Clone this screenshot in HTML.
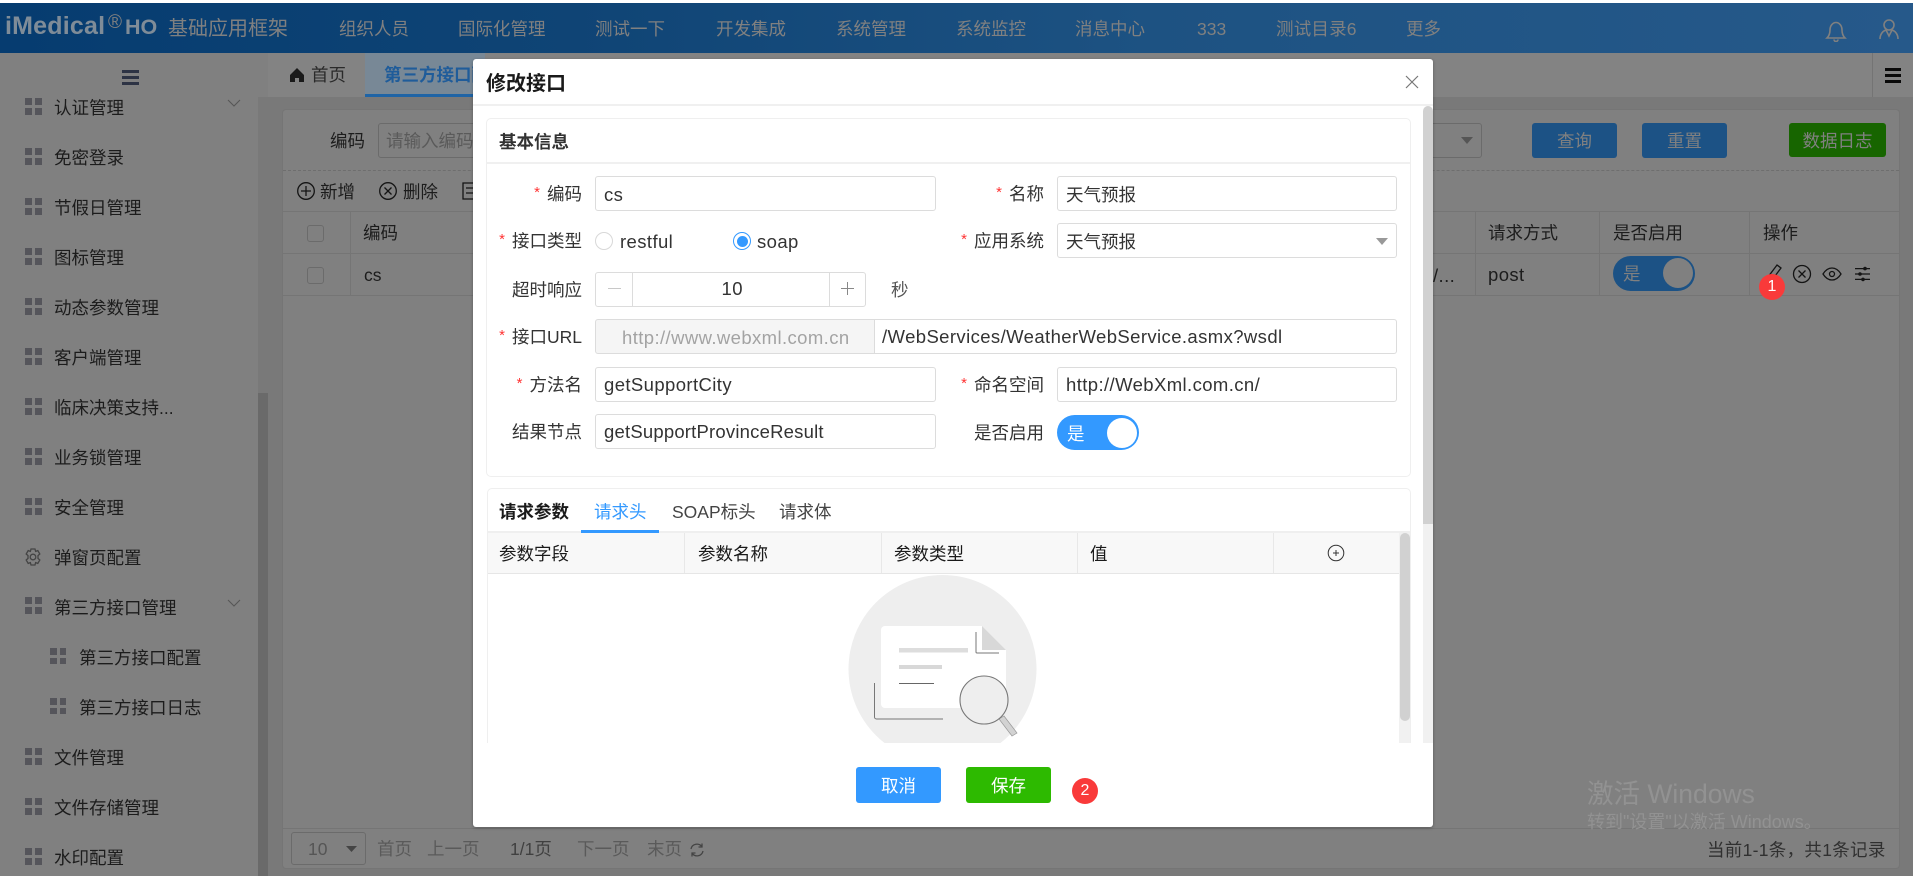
<!DOCTYPE html>
<html lang="zh"><head><meta charset="utf-8"><title>修改接口</title>
<style>
*{box-sizing:border-box}
html,body{margin:0;padding:0;width:1920px;height:879px;overflow:hidden;background:#fff;font-family:"Liberation Sans","Noto Sans CJK SC",sans-serif;font-size:17.5px;color:#1c1c1c}
.t{position:absolute;white-space:nowrap;transform:translateY(-50%);line-height:24px}
.b{position:absolute}
svg{position:absolute;overflow:hidden}
.nav{color:#808080}
.grid{position:absolute;width:17px;height:17px;background:
 linear-gradient(#55555b,#55555b) 0 0/7px 7px no-repeat,
 linear-gradient(#55555b,#55555b) 10px 0/7px 7px no-repeat,
 linear-gradient(#55555b,#55555b) 0 10px/7px 7px no-repeat,
 linear-gradient(#55555b,#55555b) 10px 10px/7px 7px no-repeat}
.grid.s{width:16px;height:16px}
.l{position:absolute;background:#757575}
.inp{position:absolute;background:#fff;border:1.25px solid #dcdcdc;border-radius:3px}
.m{color:#333}
.lb{color:#333;text-align:right}
.lb i{color:#f33;font-style:normal;font-size:15px;margin-right:7px;position:relative;top:-3px}
.v{color:#333}
.lat{font-size:18.5px;letter-spacing:.4px}
.btn{position:absolute;border-radius:3px;display:flex;align-items:center;justify-content:center}
.badge{position:absolute;width:26px;height:26px;border-radius:50%;background:#f93a3a;color:#fff;font-size:16px;display:flex;align-items:center;justify-content:center}
</style></head><body>

<!-- page -->
<div class="b" style="left:0;top:3px;width:1913px;height:873px;background:#808080;overflow:hidden"></div>

<!-- header -->
<div class="b" style="left:0;top:3px;width:1913px;height:50px;background:linear-gradient(90deg,#063c70,#0f4475 30%,#1d5282 60%,#26598a)"></div>
<div class="t nav" style="left:5px;top:26px;font-size:25px;font-weight:bold;letter-spacing:.2px;color:#7f8c98">iMedical</div>
<div class="t nav" style="left:108px;top:23px;font-size:19px">®</div>
<div class="t nav" style="left:125px;top:27px;font-size:21.500px;font-weight:bold;color:#7f8c98">HO</div>
<div class="t nav" style="left:168px;top:29px;font-size:20px">基础应用框架</div>
<div class="t nav" style="left:339px;top:29px">组织人员</div>
<div class="t nav" style="left:458px;top:29px">国际化管理</div>
<div class="t nav" style="left:595px;top:29px">测试一下</div>
<div class="t nav" style="left:716px;top:29px">开发集成</div>
<div class="t nav" style="left:836px;top:29px">系统管理</div>
<div class="t nav" style="left:956px;top:29px">系统监控</div>
<div class="t nav" style="left:1075px;top:29px">消息中心</div>
<div class="t nav" style="left:1197px;top:29px">333</div>
<div class="t nav" style="left:1276px;top:29px;letter-spacing:.2px">测试目录6</div>
<div class="t nav" style="left:1406px;top:29px">更多</div>
<svg style="left:1824px;top:18px" width="24" height="24" viewBox="0 0 24 24" fill="none" stroke="#808080" stroke-width="1.6"><path d="M3 20c2-2 3-4 3-8 0-4 2.500-7.500 6-7.500s6 3.500 6 7.500c0 4 1 6 3 8z"/><path d="M10 21.500a2 2 0 0 0 4 0"/></svg>
<svg style="left:1878px;top:18px" width="22" height="24" viewBox="0 0 22 24" fill="none" stroke="#808080" stroke-width="1.6"><circle cx="11" cy="7" r="5"/><path d="M2 21c0-5 3-8 6-9l3 6 3-6c3 1 6 4 6 9"/></svg>

<!-- tab bar -->
<div class="b" style="left:268px;top:53px;width:1645px;height:44px;background:#838383"></div>
<div class="b" style="left:258px;top:97px;width:1655px;height:779px;background:#797979"></div>
<div class="b" style="left:365px;top:53px;width:120px;height:44px;background:#788896;border-bottom:3px solid #1f64a6"></div>
<svg style="left:289px;top:67px" width="16" height="16" viewBox="0 0 16 16"><path d="M8 1 1 8v7h5v-4h4v4h5V8z" fill="#1a1a1a"/></svg>
<div class="t" style="left:311px;top:75px;color:#2a2a2a">首页</div>
<div class="t" style="left:384px;top:75px;color:#1f5c9a;font-weight:bold">第三方接口配置</div>
<div class="l" style="left:1872px;top:53px;width:1px;height:44px;background:#747474"></div>
<div class="b" style="left:1885px;top:68px;width:16px;height:3px;background:#0a0a0a"></div>
<div class="b" style="left:1885px;top:74px;width:16px;height:3px;background:#0a0a0a"></div>
<div class="b" style="left:1885px;top:80px;width:16px;height:3px;background:#0a0a0a"></div>

<!-- sidebar -->
<div class="b" style="left:122px;top:70px;width:17px;height:3px;background:#2d3344"></div>
<div class="b" style="left:122px;top:76px;width:17px;height:3px;background:#2d3344"></div>
<div class="b" style="left:122px;top:82px;width:17px;height:3px;background:#2d3344"></div>
<div class="b" style="left:258px;top:97px;width:10px;height:296px;background:#797979"></div>
<div class="b" style="left:258px;top:393px;width:10px;height:483px;background:#6a6a6a"></div>

<div class="grid" style="left:25px;top:98px"></div><div class="t" style="left:54px;top:108px">认证管理</div>
<svg style="left:227px;top:99px" width="14" height="9" viewBox="0 0 14 9" fill="none" stroke="#555" stroke-width="1"><path d="M1 1l6 6 6-6"/></svg>
<div class="grid" style="left:25px;top:148px"></div><div class="t" style="left:54px;top:158px">免密登录</div>
<div class="grid" style="left:25px;top:198px"></div><div class="t" style="left:54px;top:208px">节假日管理</div>
<div class="grid" style="left:25px;top:248px"></div><div class="t" style="left:54px;top:258px">图标管理</div>
<div class="grid" style="left:25px;top:298px"></div><div class="t" style="left:54px;top:308px">动态参数管理</div>
<div class="grid" style="left:25px;top:348px"></div><div class="t" style="left:54px;top:358px">客户端管理</div>
<div class="grid" style="left:25px;top:398px"></div><div class="t" style="left:54px;top:408px">临床决策支持...</div>
<div class="grid" style="left:25px;top:448px"></div><div class="t" style="left:54px;top:458px">业务锁管理</div>
<div class="grid" style="left:25px;top:498px"></div><div class="t" style="left:54px;top:508px">安全管理</div>
<svg style="left:23px;top:547px" width="20" height="20" viewBox="0 0 20 20" fill="none" stroke="#444" stroke-width="1.3"><path d="M8 2h4l.6 2.400 2.200-.8 2 3.400-1.800 1.600v2.800l1.800 1.600-2 3.400-2.200-.8L12 18H8l-.6-2.400-2.200.8-2-3.400L5 11.400V8.600L3.200 7l2-3.400 2.200.8z"/><circle cx="10" cy="10" r="2.800"/></svg>
<div class="t" style="left:54px;top:558px">弹窗页配置</div>
<div class="grid" style="left:25px;top:597px"></div><div class="t" style="left:54px;top:608px">第三方接口管理</div>
<svg style="left:227px;top:599px" width="14" height="9" viewBox="0 0 14 9" fill="none" stroke="#555" stroke-width="1"><path d="M1 1l6 6 6-6"/></svg>
<div class="grid s" style="left:50px;top:648px"></div><div class="t" style="left:79px;top:658px">第三方接口配置</div>
<div class="grid s" style="left:50px;top:698px"></div><div class="t" style="left:79px;top:708px">第三方接口日志</div>
<div class="grid" style="left:25px;top:748px"></div><div class="t" style="left:54px;top:758px">文件管理</div>
<div class="grid" style="left:25px;top:798px"></div><div class="t" style="left:54px;top:808px">文件存储管理</div>
<div class="grid" style="left:25px;top:848px"></div><div class="t" style="left:54px;top:858px">水印配置</div>

<!-- main panel -->
<div class="b" style="left:282px;top:109px;width:1618px;height:760px;background:#808080;border:1px solid #757575;border-radius:4px"></div>
<div class="t" style="left:330px;top:141px">编码</div>
<div class="b" style="left:378px;top:123px;width:110px;height:35px;border:1px solid #6b6b6b;border-radius:3px"></div>
<div class="t" style="left:386px;top:141px;color:#5a5a5a">请输入编码</div>
<div class="b" style="left:1420px;top:123px;width:62px;height:35px;border:1px solid #6b6b6b;border-radius:3px"></div>
<svg style="left:1461px;top:136px" width="12" height="9" viewBox="0 0 12 9"><path d="M0 1h12L6 8z" fill="#555"/></svg>
<div class="btn" style="left:1532px;top:123px;width:85px;height:35px;background:#1c5285;color:#808080">查询</div>
<div class="btn" style="left:1642px;top:123px;width:85px;height:35px;background:#1c5285;color:#808080">重置</div>
<div class="btn" style="left:1789px;top:123px;width:97px;height:34px;background:#176500;color:#808080">数据日志</div>
<div class="b" style="left:283px;top:170px;width:1616px;border-top:1px dashed #6e6e6e"></div>

<svg style="left:296px;top:181px" width="20" height="20" viewBox="0 0 20 20" fill="none" stroke="#141414" stroke-width="1.300"><circle cx="10" cy="10" r="8.300"/><path d="M10 5v10M5 10h10"/></svg>
<div class="t" style="left:320px;top:192px">新增</div>
<svg style="left:378px;top:181px" width="20" height="20" viewBox="0 0 20 20" fill="none" stroke="#141414" stroke-width="1.300"><circle cx="10" cy="10" r="8.300"/><path d="M6.500 6.500l7 7M13.500 6.500l-7 7"/></svg>
<div class="t" style="left:403px;top:192px">删除</div>
<svg style="left:462px;top:182px" width="12" height="18" viewBox="0 0 12 18" fill="none" stroke="#141414" stroke-width="1.300"><path d="M12 1H1v16h11M4 6h8M4 11h8"/></svg>

<div class="l" style="left:283px;top:211px;width:1616px;height:1px"></div>
<div class="l" style="left:283px;top:253px;width:1616px;height:1px"></div>
<div class="l" style="left:283px;top:295px;width:1616px;height:1px"></div>
<div class="l" style="left:350px;top:211px;width:1px;height:84px"></div>
<div class="l" style="left:1475px;top:211px;width:1px;height:84px"></div>
<div class="l" style="left:1599px;top:211px;width:1px;height:84px"></div>
<div class="l" style="left:1749px;top:211px;width:1px;height:84px"></div>
<div class="b" style="left:307px;top:225px;width:17px;height:17px;border:1px solid #6b6b6b;border-radius:3px"></div>
<div class="b" style="left:307px;top:267px;width:17px;height:17px;border:1px solid #6b6b6b;border-radius:3px"></div>
<div class="t" style="left:363px;top:233px">编码</div>
<div class="t" style="left:364px;top:275px">cs</div>
<div class="t lat" style="left:1433px;top:276px">/...</div>
<div class="t" style="left:1488px;top:233px">请求方式</div>
<div class="t" style="left:1613px;top:233px">是否启用</div>
<div class="t" style="left:1763px;top:233px">操作</div>
<div class="t lat" style="left:1488px;top:275px">post</div>
<div class="b" style="left:1613px;top:256px;width:82px;height:35px;border-radius:18px;background:#1c5285"></div>
<div class="b" style="left:1663px;top:258px;width:30px;height:30px;border-radius:50%;background:#808080"></div>
<div class="t" style="left:1623px;top:274px;color:#808080">是</div>
<svg style="left:1764px;top:263px" width="20" height="20" viewBox="0 0 20 20" fill="none" stroke="#141414" stroke-width="1.300"><path d="M13 2l4 3-9 12-4 1 0-4z"/></svg>
<svg style="left:1792px;top:264px" width="20" height="20" viewBox="0 0 20 20" fill="none" stroke="#141414" stroke-width="1.300"><circle cx="10" cy="10" r="8.500"/><path d="M6.500 6.500l7 7M13.500 6.500l-7 7"/></svg>
<svg style="left:1822px;top:266px" width="20" height="16" viewBox="0 0 20 16" fill="none" stroke="#141414" stroke-width="1.300"><path d="M1 8c2.500-4 5.500-6 9-6s6.500 2 9 6c-2.500 4-5.500 6-9 6s-6.500-2-9-6z"/><circle cx="10" cy="8" r="2.500"/></svg>
<svg style="left:1855px;top:266px" width="15" height="16" viewBox="0 0 15 16" fill="#141414"><path d="M0 2h15v1.200H0zM0 7.400h15v1.200H0zM0 12.800h15V14H0z"/><circle cx="10" cy="2.600" r="1.800"/><circle cx="5" cy="8" r="1.800"/><circle cx="8" cy="13.400" r="1.800"/></svg>

<!-- pagination -->
<div class="l" style="left:283px;top:828px;width:1616px;height:1px"></div>
<div class="b" style="left:291px;top:832px;width:75px;height:33px;border:1px solid #6b6b6b;border-radius:3px"></div>
<div class="t" style="left:308px;top:849px;color:#555">10</div>
<svg style="left:346px;top:845px" width="11" height="8" viewBox="0 0 11 8"><path d="M0 1h11L5.500 7z" fill="#444"/></svg>
<div class="t" style="left:377px;top:849px;color:#5a5a5a">首页</div>
<div class="t" style="left:427px;top:849px;color:#5a5a5a">上一页</div>
<div class="t" style="left:510px;top:849px;color:#404040">1/1页</div>
<div class="t" style="left:577px;top:849px;color:#5a5a5a">下一页</div>
<div class="t" style="left:647px;top:849px;color:#5a5a5a">末页</div>
<svg style="left:689px;top:842px" width="16" height="16" viewBox="0 0 16 16" fill="none" stroke="#444" stroke-width="1.300"><path d="M2 7a6 6 0 0 1 11-2M14 9a6 6 0 0 1-11 2M13 1.500V5H9.500M3 14.500V11h3.500"/></svg>
<div class="t" style="left:1707px;top:850px;color:#303030;letter-spacing:.3px">当前1-1条，共1条记录</div>

<!-- modal -->
<div class="b" style="left:473px;top:59px;width:960px;height:768px;background:#fff;border-radius:3px;box-shadow:0 1px 3px rgba(0,0,0,.3)"></div>
<div class="t" style="left:486px;top:84px;font-size:20px;font-weight:bold;color:#1a1a1a">修改接口</div>
<svg style="left:1404px;top:74px" width="16" height="16" viewBox="0 0 16 16" fill="none" stroke="#777" stroke-width="1.200"><path d="M2 2l12 12M14 2L2 14"/></svg>
<div class="b" style="left:473px;top:104px;width:960px;height:2px;background:#f0f0f0"></div>
<div class="b" style="left:1423px;top:106px;width:10px;height:418px;background:#d1d1d1;border-radius:5px 5px 0 0"></div>
<div class="b" style="left:1423px;top:524px;width:10px;height:219px;background:#f1f1f1"></div>

<!-- basic panel -->
<div class="b" style="left:486px;top:118px;width:925px;height:359px;border:1.500px solid #efefef;border-radius:5px"></div>
<div class="b" style="left:487px;top:162px;width:923px;height:2px;background:#f0f0f0"></div>
<div class="t" style="left:499px;top:142px;font-weight:bold;color:#333">基本信息</div>

<div class="t lb" style="right:1338px;top:195px"><i>*</i>编码</div>
<div class="inp" style="left:595px;top:176px;width:341px;height:35px"></div>
<div class="t v lat" style="left:604px;top:195px">cs</div>
<div class="t lb" style="right:876px;top:195px"><i>*</i>名称</div>
<div class="inp" style="left:1057px;top:176px;width:340px;height:35px"></div>
<div class="t v" style="left:1066px;top:195px">天气预报</div>

<div class="t lb" style="right:1338px;top:242px"><i>*</i>接口类型</div>
<div class="b" style="left:595px;top:232px;width:18px;height:18px;border:1.300px solid #d8d8d8;border-radius:50%"></div>
<div class="t v lat" style="left:620px;top:242px">restful</div>
<div class="b" style="left:733px;top:232px;width:18px;height:18px;border:1.300px solid #39f;border-radius:50%"></div>
<div class="b" style="left:736.500px;top:235.500px;width:11px;height:11px;background:#39f;border-radius:50%"></div>
<div class="t v lat" style="left:757px;top:242px">soap</div>
<div class="t lb" style="right:876px;top:242px"><i>*</i>应用系统</div>
<div class="inp" style="left:1057px;top:223px;width:340px;height:35px"></div>
<div class="t v" style="left:1066px;top:242px">天气预报</div>
<svg style="left:1376px;top:237px" width="12" height="9" viewBox="0 0 12 9"><path d="M0 1h12L6 8z" fill="#999"/></svg>

<div class="t lb" style="right:1338px;top:290px">超时响应</div>
<div class="inp" style="left:595px;top:272px;width:271px;height:35px"></div>
<div class="b" style="left:632px;top:273px;width:1px;height:33px;background:#dcdcdc"></div>
<div class="b" style="left:829px;top:273px;width:1px;height:33px;background:#dcdcdc"></div>
<div class="b" style="left:608px;top:288px;width:13px;height:1.300px;background:#c8c8c8"></div>
<div class="b" style="left:841px;top:288px;width:13px;height:1.300px;background:#888"></div>
<div class="b" style="left:847px;top:282px;width:1.300px;height:13px;background:#888"></div>
<div class="t v lat" style="left:721.500px;top:289px">10</div>
<div class="t" style="left:891px;top:290px;color:#555">秒</div>

<div class="t lb" style="right:1338px;top:338px"><i>*</i>接口URL</div>
<div class="inp" style="left:595px;top:319px;width:280px;height:35px;background:#f5f5f5;border-radius:3px 0 0 3px"></div>
<div class="t lat" style="left:622px;top:338px;color:#a3a3a3">http://www.webxml.com.cn</div>
<div class="inp" style="left:874px;top:319px;width:523px;height:35px;border-radius:0 3px 3px 0"></div>
<div class="t v lat" style="left:882px;top:337px">/WebServices/WeatherWebService.asmx?wsdl</div>

<div class="t lb" style="right:1338px;top:386px"><i>*</i>方法名</div>
<div class="inp" style="left:595px;top:367px;width:341px;height:35px"></div>
<div class="t v lat" style="left:604px;top:385px">getSupportCity</div>
<div class="t lb" style="right:876px;top:386px"><i>*</i>命名空间</div>
<div class="inp" style="left:1057px;top:367px;width:340px;height:35px"></div>
<div class="t v lat" style="left:1066px;top:385px">http://WebXml.com.cn/</div>

<div class="t lb" style="right:1338px;top:432px">结果节点</div>
<div class="inp" style="left:595px;top:414px;width:341px;height:35px"></div>
<div class="t v lat" style="left:604px;top:432px;letter-spacing:.2px">getSupportProvinceResult</div>
<div class="t lb" style="right:876px;top:433px">是否启用</div>
<div class="b" style="left:1057px;top:415px;width:82px;height:35px;border-radius:18px;background:#39f"></div>
<div class="b" style="left:1107px;top:418px;width:30px;height:30px;border-radius:50%;background:#fff"></div>
<div class="t" style="left:1067px;top:434px;color:#fff">是</div>

<!-- params panel -->
<div class="b" style="left:487px;top:488px;width:924px;height:255px;overflow:hidden;border:1.500px solid #efefef;border-bottom:0;border-radius:5px 5px 0 0"></div>
<div class="t" style="left:499px;top:512px;font-weight:bold;color:#1a1a1a">请求参数</div>
<div class="t" style="left:594px;top:512px;color:#39f">请求头</div>
<div class="t" style="left:672px;top:512px;color:#444">SOAP标头</div>
<div class="t" style="left:779px;top:512px;color:#444">请求体</div>
<div class="b" style="left:488px;top:531px;width:922px;height:2px;background:#efefef"></div>
<div class="b" style="left:581px;top:530px;width:78px;height:3px;background:#39f"></div>
<div class="b" style="left:488px;top:533px;width:911px;height:41px;background:#f8f8f8;border-bottom:1.500px solid #e6e6e6"></div>
<div class="b" style="left:684px;top:533px;width:1px;height:40px;background:#e8e8e8"></div>
<div class="b" style="left:881px;top:533px;width:1px;height:40px;background:#e8e8e8"></div>
<div class="b" style="left:1077px;top:533px;width:1px;height:40px;background:#e8e8e8"></div>
<div class="b" style="left:1273px;top:533px;width:1px;height:40px;background:#e8e8e8"></div>
<div class="t" style="left:499px;top:554px;color:#1a1a1a">参数字段</div>
<div class="t" style="left:698px;top:554px;color:#1a1a1a">参数名称</div>
<div class="t" style="left:894px;top:554px;color:#1a1a1a">参数类型</div>
<div class="t" style="left:1090px;top:554px;color:#1a1a1a">值</div>
<svg style="left:1327px;top:544px" width="18" height="18" viewBox="0 0 18 18" fill="none" stroke="#333" stroke-width="1"><circle cx="9" cy="9" r="7.800"/><path d="M6 9h6M9 6v6"/></svg>
<div class="b" style="left:1399px;top:533px;width:11px;height:210px;background:#f1f1f1"></div>
<div class="b" style="left:1400px;top:533px;width:10px;height:188px;background:#d1d1d1;border-radius:5px"></div>

<svg style="left:840px;top:575px" width="210" height="168" viewBox="840 575 210 168">
<circle cx="942.500" cy="669" r="94" fill="#eee"/>
<path d="M885 626h97l24 24v54a4 4 0 0 1-4 4H885a4 4 0 0 1-4-4v-74a4 4 0 0 1 4-4z" fill="#fff"/>
<path d="M982 626l24 24h-24z" fill="#d8d8d8"/>
<path d="M976 632v20a1 1 0 0 0 1 1h22" fill="none" stroke="#777" stroke-width="1"/>
<rect x="899" y="648" width="69" height="4.500" fill="#ddd"/>
<rect x="899" y="665" width="43" height="4" fill="#d8d8d8"/>
<rect x="899" y="683" width="35" height="1" fill="#666"/>
<path d="M874.500 683v34a2 2 0 0 0 2 2H943" fill="none" stroke="#777" stroke-width="1"/>
<path d="M999 719l5-3 13 17-5 3z" fill="#d2d2d2" stroke="#999" stroke-width=".7"/>
<circle cx="984" cy="700" r="24" fill="#eee" stroke="#777" stroke-width="1.100"/>
</svg>

<!-- footer -->
<div class="b" style="left:473px;top:743px;width:960px;height:23px;background:#fff"></div>
<div class="btn" style="left:856px;top:767px;width:85px;height:36px;background:#39f;color:#fff">取消</div>
<div class="btn" style="left:966px;top:767px;width:85px;height:36px;background:#2dba00;color:#fff">保存</div>
<div class="badge" style="left:1072px;top:778px">2</div>
<div class="badge" style="left:1759px;top:274px">1</div>

<!-- watermark -->
<div class="t" style="left:1587px;top:794px;font-size:26.500px;line-height:34px;color:#929292">激活 Windows</div>
<div class="t" style="left:1587px;top:822px;font-size:18px;color:#929292">转到"设置"以激活 Windows。</div>
</body></html>
